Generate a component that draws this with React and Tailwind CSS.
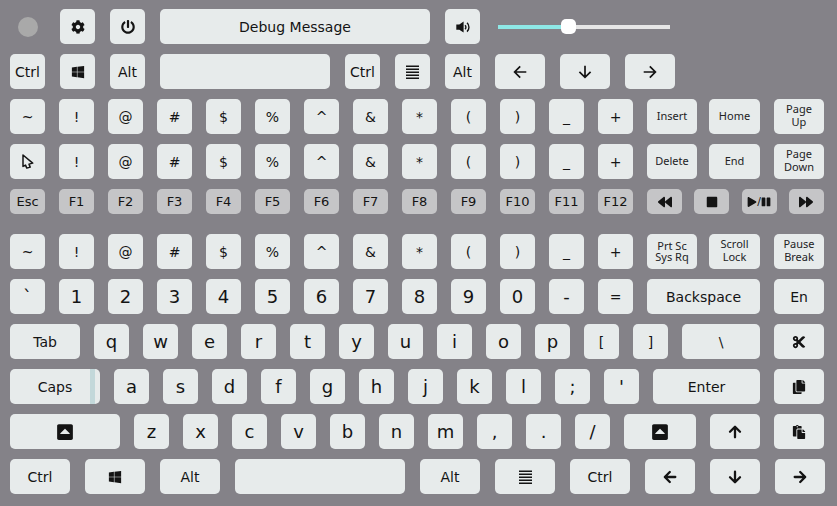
import { useState } from "react";
import {
  FaBackward,
  FaCaretSquareUp,
  FaCog,
  FaCopy,
  FaCut,
  FaForward,
  FaPaste,
  FaPause,
  FaPlay,
  FaPowerOff,
  FaStop,
  FaWindows,
} from "react-icons/fa";

const TONES = {
  light: "h-[35px] bg-[#e7ebeb]",
  dim: "h-[25px] bg-[#c5c5c7]",
};

const TEXT = {
  base: "text-[14px] leading-5",
  fn: "text-[13px] leading-4",
  big: "text-[18px] leading-6",
  small: "pb-[3px] font-['Noto_Sans',sans-serif] text-[11px] leading-[13px] text-[#222224]",
  snug: "pb-[2px] font-['Noto_Sans',sans-serif] text-[11px] leading-[11px] text-[#222224]",
};

function Key({ label, children, width = "w-[35px] shrink-0", tone = "light", text = "base" }) {
  return (
    <button
      type="button"
      aria-label={label}
      className={`relative flex items-center justify-center overflow-hidden rounded-[5px] text-center whitespace-pre ${TONES[tone]} ${TEXT[text]} ${width}`}
    >
      {children}
    </button>
  );
}

function Arrow({ direction, bold = false }) {
  const turn = { left: "rotate-0", up: "rotate-90", right: "rotate-180", down: "-rotate-90" }[direction];
  return (
    <svg
      viewBox="0 0 14 14"
      className={`size-[14px] ${turn}`}
      fill="none"
      stroke="currentColor"
      strokeWidth={bold ? 2.3 : 1.7}
      strokeLinecap={bold ? "round" : "butt"}
      strokeLinejoin={bold ? "round" : "miter"}
    >
      {bold ? <path d="M12.3 7H2M6.8 2L1.8 7l5 5" /> : <path d="M13.3 7H2M7.2 1.4L1.6 7l5.6 5.6" />}
    </svg>
  );
}

function MenuIcon() {
  return (
    <svg viewBox="0 0 13 14" className="h-[14px] w-[13px]" fill="currentColor">
      <path d="M0 .5h13v1.5H0zM0 3.5h13v1.5H0zM0 6.5h13v1.5H0zM0 9.5h13v1.5H0zM0 12.5h13v1.5H0z" />
    </svg>
  );
}

function VolumeIcon() {
  return (
    <svg viewBox="0 0 14 14" className="size-[14px]" fill="none" stroke="currentColor" strokeWidth="1.4">
      <path d="M.3 4.6h3L7.6 1.6v11L3.3 9.8h-3z" fill="currentColor" stroke="none" />
      <path d="M9 5.2c1.2 1 1.2 3 0 4M11 2.8c2.6 2.2 2.6 6.6 0 8.8" />
    </svg>
  );
}

function PointerIcon() {
  return (
    <svg viewBox="0 0 12 15" className="h-[15px] w-3" fill="none" stroke="currentColor" strokeWidth="1.5" strokeLinejoin="round">
      <path d="M1 1v11.4l2.5-1.3 1.3 3 3.4-1-1.2-3 3.7-1z" />
    </svg>
  );
}

const SYMBOLS = ["~", "!", "@", "#", "$", "%", "^", "&", "*", "(", ")", "_", "+"];
const FUNCTIONS = ["Esc", "F1", "F2", "F3", "F4", "F5", "F6", "F7", "F8", "F9", "F10", "F11", "F12"];

function SymbolRow({ first, extras }) {
  return (
    <div className="flex gap-[14px]">
      {SYMBOLS.map((s, i) => (
        <Key key={s} label={i === 0 && first ? "Pointer" : undefined}>
          {i === 0 && first ? first : s}
        </Key>
      ))}
      <div className="flex flex-1 gap-3">
        <Key width="w-[50px] shrink-0" text={extras[0].includes("\n") ? "snug" : "small"}>{extras[0]}</Key>
        <Key width="flex-1" text="small">{extras[1]}</Key>
      </div>
      <Key width="w-[50px] shrink-0" text="small">{extras[2]}</Key>
    </div>
  );
}

function Letters({ keys }) {
  return keys.split("").map((k) => (
    <Key key={k} text={"[]=".includes(k) ? "base" : "big"}>
      {k}
    </Key>
  ));
}

function VolumeSlider() {
  const [volume, setVolume] = useState(40);
  return (
    <input
      type="range"
      aria-label="Volume"
      min="0"
      max="100"
      value={volume}
      onChange={(e) => setVolume(Number(e.target.value))}
      style={{ backgroundImage: `linear-gradient(to right, #8ee8e6 ${volume}%, #e6e6e6 ${volume}%)` }}
      className="ml-[3px] h-1 w-[172px] appearance-none [&::-webkit-slider-thumb]:size-[15px] [&::-webkit-slider-thumb]:appearance-none [&::-webkit-slider-thumb]:rounded-[5px] [&::-webkit-slider-thumb]:bg-white"
    />
  );
}

export default function App() {
  return (
    <main className="min-h-screen bg-[#848288] pt-[9px] pr-3 pb-3 pl-[10px] font-['DejaVu_Sans',sans-serif] text-[#141414]">
      <div className="flex flex-col gap-[10px] pr-px">
        <div className="flex items-center gap-[15px]">
          <div className="flex w-[35px] justify-center">
            <span className="size-5 rounded-full bg-[#a9a9a9]" />
          </div>
          <Key label="Settings"><FaCog size={14} /></Key>
          <Key label="Power"><FaPowerOff size={14} /></Key>
          <Key width="w-[270px]">Debug Message</Key>
          <Key label="Sound"><VolumeIcon /></Key>
          <VolumeSlider />
        </div>

        <div className="flex gap-[15px]">
          <Key>Ctrl</Key>
          <Key label="Windows"><FaWindows size={14} /></Key>
          <Key>Alt</Key>
          <Key label="Space" width="w-[170px]" />
          <Key>Ctrl</Key>
          <Key label="Menu"><MenuIcon /></Key>
          <Key>Alt</Key>
          <Key label="Left" width="w-[50px]"><Arrow direction="left" /></Key>
          <Key label="Down" width="w-[50px]"><Arrow direction="down" /></Key>
          <Key label="Right" width="w-[50px]"><Arrow direction="right" /></Key>
        </div>

        <SymbolRow extras={["Insert", "Home", "Page\nUp"]} />
        <SymbolRow first={<PointerIcon />} extras={["Delete", "End", "Page\nDown"]} />

        <div className="mb-[10px] flex gap-[14px]">
          {FUNCTIONS.map((f) => (
            <Key key={f} tone="dim" text="fn">{f}</Key>
          ))}
          <div className="flex flex-1 justify-between">
            <Key label="Rewind" tone="dim"><FaBackward size={14} /></Key>
            <Key label="Stop" tone="dim"><FaStop size={12} /></Key>
            <Key label="Play or pause" tone="dim" text="fn">
              <FaPlay size={10} />
              <span className="text-[11px]">/</span>
              <FaPause size={10} />
            </Key>
            <Key label="Forward" tone="dim"><FaForward size={14} /></Key>
          </div>
        </div>

        <SymbolRow extras={["Prt Sc\nSys Rq", "Scroll\nLock", "Pause\nBreak"]} />

        <div className="flex gap-[14px]">
          <Letters keys="`1234567890-=" />
          <Key width="flex-1">Backspace</Key>
          <Key width="w-[50px] shrink-0">En</Key>
        </div>

        <div className="flex gap-[14px]">
          <Key width="w-[70px] shrink-0">Tab</Key>
          <Letters keys="qwertyuiop[]" />
          <Key width="flex-1">\</Key>
          <Key label="Cut" width="w-[50px] shrink-0"><FaCut size={14} /></Key>
        </div>

        <div className="flex gap-[14px]">
          <Key width="w-[90px] shrink-0">
            Caps
            <span className="absolute inset-y-0 right-[5px] w-[5px] bg-[#c3d8da]" />
          </Key>
          <Letters keys="asdfghjkl;'" />
          <Key width="flex-1">Enter</Key>
          <Key label="Copy" width="w-[50px] shrink-0"><FaCopy size={14} /></Key>
        </div>

        <div className="flex gap-[14px]">
          <Key label="Left shift" width="w-[110px] shrink-0"><FaCaretSquareUp size={18} /></Key>
          <Letters keys="zxcvbnm,./" />
          <Key label="Right shift" width="flex-1"><FaCaretSquareUp size={18} /></Key>
          <Key label="Up" width="w-[50px] shrink-0"><Arrow direction="up" bold /></Key>
          <Key label="Paste" width="w-[50px] shrink-0"><FaPaste size={14} /></Key>
        </div>
      </div>

      <div className="mt-[10px] flex gap-[15px]">
        <Key width="w-[60px] shrink-0">Ctrl</Key>
        <Key label="Windows" width="w-[60px] shrink-0"><FaWindows size={14} /></Key>
        <Key width="w-[60px] shrink-0">Alt</Key>
        <Key label="Space" width="flex-1" />
        <Key width="w-[60px] shrink-0">Alt</Key>
        <Key label="Menu" width="w-[60px] shrink-0"><MenuIcon /></Key>
        <Key width="w-[60px] shrink-0">Ctrl</Key>
        <Key label="Left" width="w-[50px] shrink-0"><Arrow direction="left" bold /></Key>
        <Key label="Down" width="w-[50px] shrink-0"><Arrow direction="down" bold /></Key>
        <Key label="Right" width="w-[50px] shrink-0"><Arrow direction="right" bold /></Key>
      </div>
    </main>
  );
}
